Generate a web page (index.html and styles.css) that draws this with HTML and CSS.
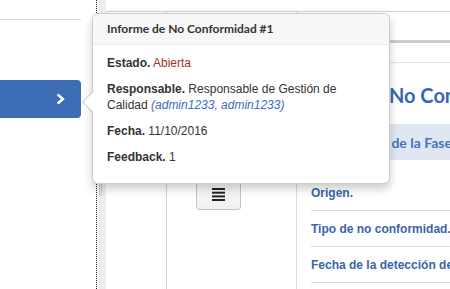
FILE: index.html
```html
<!DOCTYPE html>
<html lang="es">
<head>
  <meta charset="UTF-8">
  <meta name="viewport" content="width=device-width, initial-scale=1.0">
  <title>Informe de No Conformidad</title>
  <link rel="stylesheet" href="styles.css">
</head>
<body>
  <div class="app">
    <aside class="sidebar">
      <div class="sidebar-head"></div>
      <a class="nav-toggle" href="#">
        <svg width="8" height="10" viewBox="0 0 8 10"><polyline points="1.5,1.2 5.8,5 1.5,8.8" fill="none" stroke="#fff" stroke-width="2.6" stroke-linecap="square"/></svg>
      </a>
    </aside>
    <div class="splitter"><span class="grip"></span></div>
    <main class="main">
      <div class="topbar"></div>
      <div class="workspace">
        <div class="tools">
          <div class="tools-gutter"></div>
          <div class="tools-col">
            <button class="menu-btn">
              <svg width="13" height="13" viewBox="0 0 13 13"><rect y="0" width="13" height="2" fill="#222"/><rect y="3.7" width="13" height="2" fill="#222"/><rect y="7.4" width="13" height="2" fill="#222"/><rect y="11" width="13" height="2" fill="#222"/></svg>
            </button>
          </div>
        </div>
        <section class="content">
          <div class="tabs"></div>
          <div class="tab-head"></div>
          <h2 class="title">Informe de No Conformidad #1</h2>
          <div class="band">Información de la Fase de Detección</div>
          <div class="row">Origen.</div>
          <div class="row">Tipo de no conformidad.</div>
          <div class="row">Fecha de la detección de la no conformidad.</div>
        </section>
      </div>
    </main>
  </div>

  <div class="popover">
    <div class="arrow"></div>
    <h3 class="popover-title">Informe de No Conformidad #1</h3>
    <div class="popover-content">
      <p><b>Estado.</b> <span class="estado">Abierta</span></p>
      <p><b>Responsable.</b> Responsable de Gestión de Calidad <i class="usuarios">(admin1233, admin1233)</i></p>
      <p><b>Fecha.</b> 11/10/2016</p>
      <p><b>Feedback.</b> 1</p>
    </div>
  </div>
</body>
</html>
```

FILE: styles.css
```css
body {
  margin: 0;
  width: 450px;
  height: 289px;
  overflow: hidden;
  background: #fff;
  font-family: 'Liberation Sans', Arial, sans-serif;
  font-size: 12px;
  color: #333;
}
.app {
  display: flex;
  height: 289px;
}
.sidebar {
  width: 96px;
  flex-shrink: 0;
  border-right: 1px dotted #222;
}
.sidebar-head {
  width: 81px;
  height: 19px;
  border-bottom: 1px solid #dcdcdc;
}
.nav-toggle {
  display: flex;
  align-items: center;
  justify-content: flex-end;
  width: 81px;
  height: 38px;
  margin-top: 60px;
  padding-right: 16px;
  box-sizing: border-box;
  background: #3d6db5;
  border-radius: 0 4px 4px 0;
}
.splitter {
  width: 9px;
  flex-shrink: 0;
  background: linear-gradient(to right, #fff 2px, #ededed 2px);
}
.grip {
  display: block;
  width: 1px;
  height: 28px;
  margin: 168px 0 0 2px;
  border-left: 1px solid #c9c9c9;
  border-right: 1px solid #c9c9c9;
}
.main {
  flex: 1;
  display: flex;
  flex-direction: column;
  min-width: 0;
}
.topbar {
  height: 11px;
  border-bottom: 1px solid #cfcfcf;
  flex-shrink: 0;
}
.workspace {
  flex: 1;
  display: flex;
}
.tools {
  width: 190px;
  flex-shrink: 0;
  display: flex;
  border-right: 1px solid #c4e2e7;
}
.tools-gutter {
  width: 60px;
  border-right: 1px solid #d2d2d2;
}
.tools-col {
  padding: 166px 0 0 29px;
}
.menu-btn {
  display: flex;
  align-items: center;
  justify-content: center;
  width: 45px;
  height: 32px;
  padding: 0;
  background: linear-gradient(#fbfbfb, #f0f0f0);
  border: 1px solid #c3c3c3;
  border-radius: 0 0 3px 3px;
}
.content {
  flex: 1;
  min-width: 0;
  white-space: nowrap;
  overflow: hidden;
}
.tabs {
  height: 28px;
  border-bottom: 3px solid #cbcbcb;
}
.tab-head {
  height: 19px;
  border-bottom: 1px solid #e2e2e2;
}
.title {
  margin: 20px 0 17px;
  padding-left: 0;
  text-indent: -10px;
  font-family: Lato, sans-serif;
  font-weight: 700;
  font-size: 20px;
  line-height: 24px;
  color: #3867b2;
}
.band {
  height: 36px;
  line-height: 37px;
  padding-left: 16px;
  margin-bottom: 15px;
  background: #dfe7f3;
  font-family: Lato, sans-serif;
  font-weight: 700;
  font-size: 14px;
  color: #4a73b6;
}
.row {
  margin-left: 14px;
  padding: 10px 0 9px;
  line-height: 16px;
  border-bottom: 1px solid #c6e4ea;
  font-weight: 700;
  color: #3c63aa;
}
.popover {
  position: absolute;
  left: 92px;
  top: 13px;
  width: 298px;
  box-sizing: border-box;
  background: #fff;
  border: 1px solid rgba(0,0,0,0.2);
  border-radius: 6px;
  box-shadow: 0 5px 10px rgba(0,0,0,0.2);
}
.arrow {
  position: absolute;
  top: 77px;
  left: -11px;
  width: 0;
  height: 0;
  border-style: solid;
  border-width: 11px 11px 11px 0;
  border-color: transparent rgba(0,0,0,0.25) transparent transparent;
}
.arrow::after {
  content: "";
  position: absolute;
  top: -10px;
  left: 1px;
  border-style: solid;
  border-width: 10px 10px 10px 0;
  border-color: transparent #fff transparent transparent;
}
.popover-title {
  margin: 0;
  padding: 8px 14px;
  line-height: 14px;
  font-family: Lato, sans-serif;
  font-weight: 700;
  font-size: 12px;
  color: #333;
  background: #f7f7f7;
  border-bottom: 1px solid #ebebeb;
  border-radius: 5px 5px 0 0;
}
.popover-content {
  padding: 10px 14px 8px;
  line-height: 16px;
}
.popover-content p {
  margin: 0 0 10px;
}
.estado {
  color: #a3322b;
}
.usuarios {
  color: #3a6cc0;
}
```
